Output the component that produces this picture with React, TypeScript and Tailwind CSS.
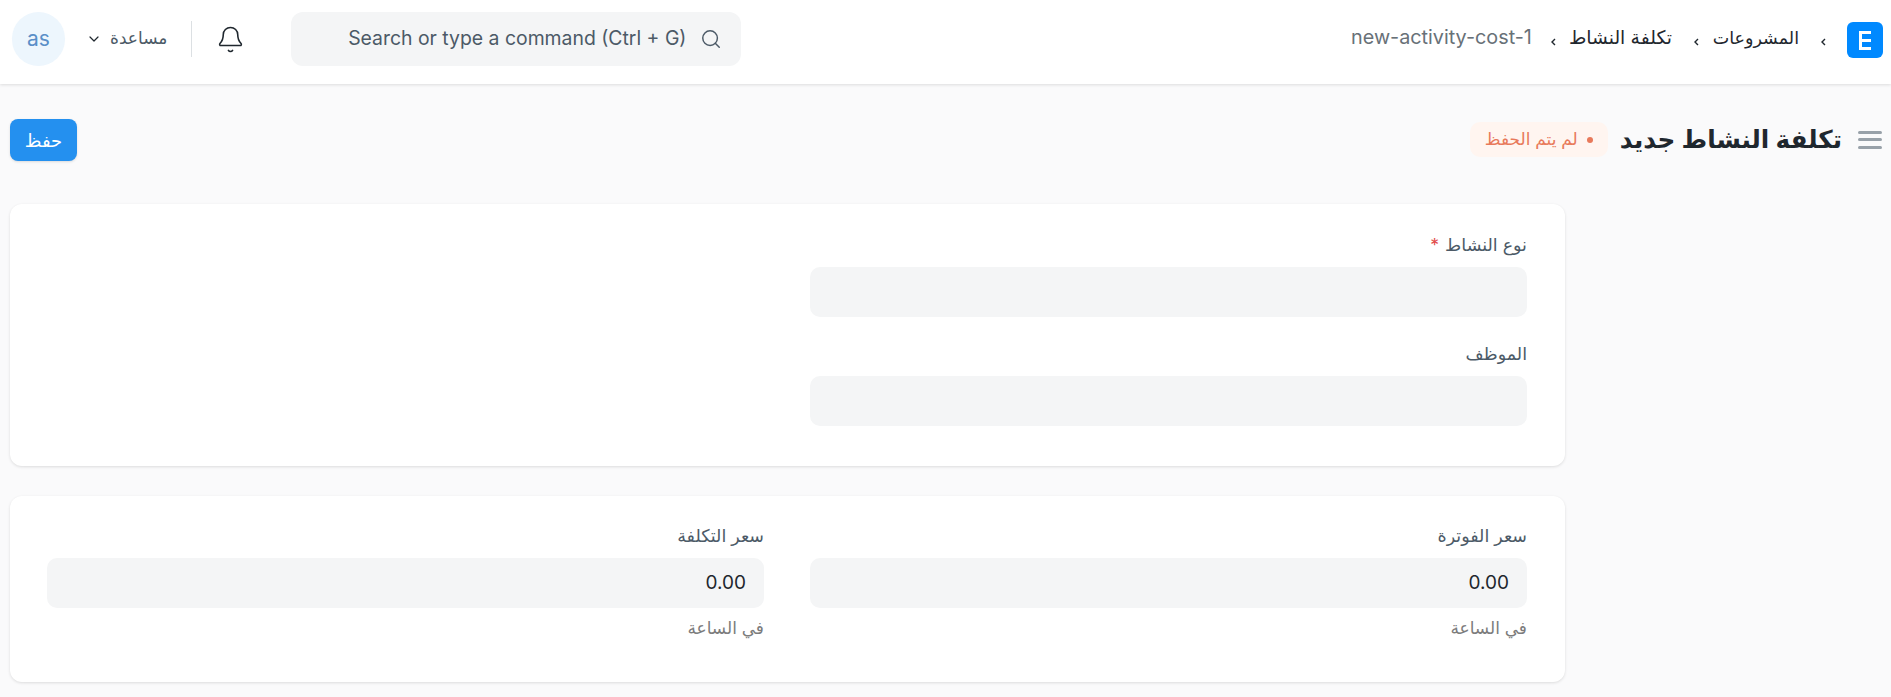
import React from "react";
import { Bell, ChevronDown, Search } from "lucide-react";

const font = "[font-family:Inter,'DejaVu_Sans',sans-serif]";

function Crumb({ children, last, wide }: { children: React.ReactNode; last?: boolean; wide?: boolean }) {
  const cls = last
    ? "text-[#687178] text-[19.8px] pb-[4px]"
    : wide
      ? "text-[#1f272e] text-[17.5px] w-[86px] pb-[4px] whitespace-nowrap"
      : "text-[#1f272e] text-[18.8px] pb-[4px]";
  return (
    <div className="flex items-center">
      <svg
        width="5"
        height="8"
        viewBox="0 0 5 8"
        className={last ? "ml-[19px] mr-[13px] mt-[4px] text-[#1f272e]" : "ml-[22px] mr-[14px] mt-[4px] text-[#1f272e]"}
      >
        <path d="M4 1 1 4l3 3" fill="none" stroke="currentColor" strokeWidth="1.4" />
      </svg>
      <span className={cls}>{children}</span>
    </div>
  );
}

function Field({ label, value, help, req }: { label: string; value?: string; help?: string; req?: boolean }) {
  return (
    <div className="w-[717px]">
      <div className="h-[24px] mb-[10px] text-[17.5px] leading-[24px] text-[#4c5a67]">
        {label}
        {req && <span className="text-[#e24c4c] mr-[6px]">*</span>}
      </div>
      <div className="h-[50px] rounded-[10px] bg-[#f4f5f6] px-[18px] flex items-center text-[19px] text-[#1f272e]">
        {value}
      </div>
      {help && <div className="mt-[8px] text-[17px] leading-[24px] text-[#7c7c7c]">{help}</div>}
    </div>
  );
}

export default function App() {
  return (
    <div dir="rtl" className={`${font} min-h-[697px] bg-[#fafafb] overflow-hidden`}>
      <header className="h-[84px] bg-white shadow-[0_1px_3px_rgba(0,0,0,0.12)] flex items-start justify-between pt-[12px] pr-[8px] pl-[12px]">
        <div className="flex items-center mt-[10px]">
          <div className="w-[36px] h-[36px] rounded-[6px] bg-[#0089ff] flex items-center justify-center">
            <svg width="12" height="19" viewBox="0 0 12 19">
              <path d="M0 0h12v3H0zM0 8h12v3H0zM0 16h12v3H0zM0 0h3v19H0z" fill="#fff" />
            </svg>
          </div>
          <div className="w-[7px]" />
          <Crumb wide>المشروعات</Crumb>
          <Crumb>تكلفة النشاط</Crumb>
          <Crumb last>new-activity-cost-1</Crumb>
        </div>
        <div className="flex items-center">
          <div dir="ltr" className="w-[450px] h-[54px] rounded-[12px] bg-[#f4f5f6] flex items-center justify-end pr-[19px] text-[19.4px] text-[#4c5a67]">
            <span>Search or type a command (Ctrl + G)</span>
            <Search className="w-[22px] h-[22px] ml-[14px]" strokeWidth={1.6} />
          </div>
          <Bell className="w-[29px] h-[29px] mr-[46px] text-[#1f272e]" strokeWidth={1.3} />
          <div className="w-px h-[36px] bg-[#dce0e3] mr-[24px]" />
          <div className="flex items-center mr-[24px] text-[17px] text-[#4c5a67]">
            <span>مساعدة</span>
            <ChevronDown className="w-[16px] h-[16px] mr-[8px] text-[#1f272e]" strokeWidth={1.8} />
          </div>
          <div className="w-[53px] h-[54px] rounded-full bg-[#edf6fd] text-[#5a8fc8] text-[21px] flex items-center justify-center mr-[21px]">
            as
          </div>
        </div>
      </header>

      <div className="flex items-center justify-between h-[42px] mt-[35px] pr-[9px] pl-[10px]">
        <div className="flex items-center">
          <div className="flex flex-col gap-[4.5px] w-[24px]">
            <div className="h-[3px] bg-[#98a1a9] rounded-full" />
            <div className="h-[3px] bg-[#98a1a9] rounded-full" />
            <div className="h-[3px] bg-[#98a1a9] rounded-full" />
          </div>
          <h1 className="text-[24.7px] font-semibold text-[#1f272e] mr-[16px]">تكلفة النشاط جديد</h1>
          <div className="h-[35px] rounded-[10px] bg-[#fff5f0] pr-[15px] pl-[15px] mr-[12px] flex items-center text-[17px] text-[#e8795a]">
            <span className="w-[6px] h-[6px] rounded-full bg-[#e8795a] ml-[9px]" />
            لم يتم الحفظ
          </div>
        </div>
        <button className="w-[67px] h-[42px] rounded-[8px] bg-[#2490ef] text-white text-[18px] shadow-sm">حفظ</button>
      </div>

      <main className="w-[1555px] mr-[326px] ml-[10px] mt-[43px] flex flex-col gap-[30px]">
        <section className="h-[262px] rounded-[12px] bg-white shadow-[0_1px_3px_rgba(0,0,0,0.12)] pt-[29px] pr-[38px] flex flex-col gap-[25px]">
          <Field label="نوع النشاط" req />
          <Field label="الموظف" />
        </section>
        <section className="h-[186px] rounded-[12px] bg-white shadow-[0_1px_3px_rgba(0,0,0,0.12)] pt-[28px] pr-[38px] flex gap-[46px]">
          <Field label="سعر الفوترة" value="0.00" help="في الساعة" />
          <Field label="سعر التكلفة" value="0.00" help="في الساعة" />
        </section>
      </main>
    </div>
  );
}
